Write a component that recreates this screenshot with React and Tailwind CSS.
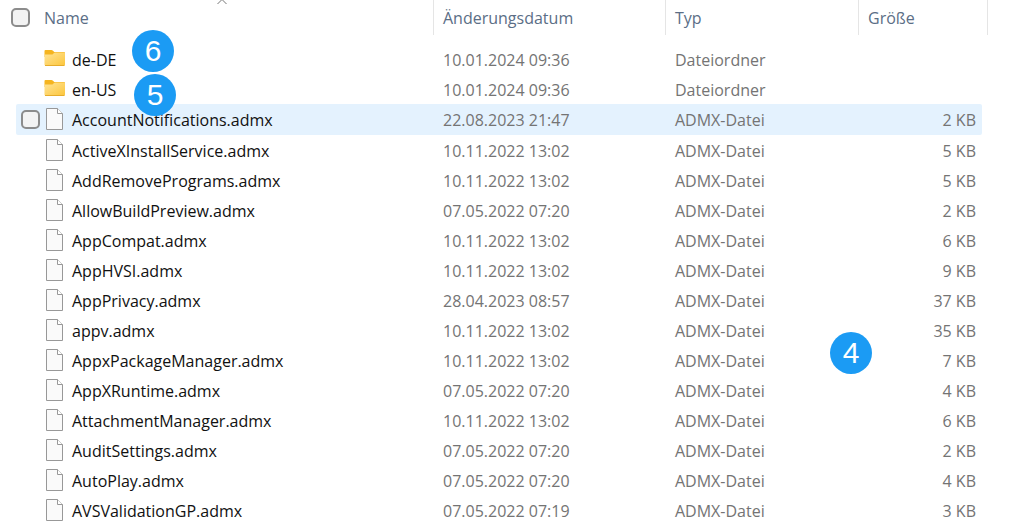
import React from 'react';

const entries = [
  { name: 'de-DE', date: '10.01.2024 09:36', folder: true },
  { name: 'en-US', date: '10.01.2024 09:36', folder: true },
  { name: 'AccountNotifications.admx', date: '22.08.2023 21:47', size: 2, hovered: true },
  { name: 'ActiveXInstallService.admx', date: '10.11.2022 13:02', size: 5 },
  { name: 'AddRemovePrograms.admx', date: '10.11.2022 13:02', size: 5 },
  { name: 'AllowBuildPreview.admx', date: '07.05.2022 07:20', size: 2 },
  { name: 'AppCompat.admx', date: '10.11.2022 13:02', size: 6 },
  { name: 'AppHVSI.admx', date: '10.11.2022 13:02', size: 9 },
  { name: 'AppPrivacy.admx', date: '28.04.2023 08:57', size: 37 },
  { name: 'appv.admx', date: '10.11.2022 13:02', size: 35 },
  { name: 'AppxPackageManager.admx', date: '10.11.2022 13:02', size: 7 },
  { name: 'AppXRuntime.admx', date: '07.05.2022 07:20', size: 4 },
  { name: 'AttachmentManager.admx', date: '10.11.2022 13:02', size: 6 },
  { name: 'AuditSettings.admx', date: '07.05.2022 07:20', size: 2 },
  { name: 'AutoPlay.admx', date: '07.05.2022 07:20', size: 4 },
  { name: 'AVSValidationGP.admx', date: '07.05.2022 07:19', size: 3 },
];

function FolderIcon() {
  return (
    <svg width="22" height="18" viewBox="0 0 22 18" className="shrink-0" aria-hidden="true">
      <defs>
        <linearGradient id="folder-front" x1="0" y1="0" x2="1" y2="1">
          <stop offset="0" stopColor="#ffe498" />
          <stop offset="1" stopColor="#fcc63c" />
        </linearGradient>
      </defs>
      <path d="M.5 2Q.5 1 1.5 1h6q.7 0 1.200.4L10.300 3H20q1 0 1 1v4H.5z" fill="#f5b41f" />
      <path d="M.5 5.500h7.300q.7 0 1.200-.5L10 4q.4-.5 1-.5h9q1 0 1 1v11q0 1-1 1H1.500q-1 0-1-1z" fill="url(#folder-front)" />
      <path d="M1 16.500h19.500" stroke="#e6ac2c" strokeWidth="1" />
    </svg>
  );
}

function FileIcon() {
  return (
    <svg width="18" height="22" viewBox="0 0 18 22" className="shrink-0" aria-hidden="true">
      <path d="M.5.5h11l5 5v16H.5z" fill="#fafafa" stroke="#989898" />
      <path d="M11.500.5v5h5" fill="#fff" stroke="#989898" />
    </svg>
  );
}

function Checkbox({ label }) {
  return (
    <input
      type="checkbox"
      aria-label={label}
      className="block size-[19px] appearance-none rounded-[5px] border-2 border-[#8c8c8c] bg-[#f3f3f3] checked:bg-[#0067c0]"
    />
  );
}

function Badge({ className, children }) {
  return (
    <span
      className={
        "absolute flex size-[42px] items-center justify-center rounded-full bg-[#1b9bf4] font-['Liberation_Sans',sans-serif] text-[30px] leading-none text-white " +
        className
      }
    >
      {children}
    </span>
  );
}

function Row({ entry }) {
  const shade = entry.hovered ? 'bg-[#e4f2fe]' : '';
  return (
    <tr className={entry.hovered ? 'h-[31px]' : 'h-[30px]'}>
      <td />
      <td className={'rounded-l-xs pl-[5px] ' + shade}>
        {entry.hovered && <Checkbox label={entry.name} />}
      </td>
      <td className={'align-top text-[#111111] ' + shade}>
        <div className="flex h-[30px] items-center">
          <span className={entry.folder ? 'mb-[2px] flex w-7' : 'flex w-7 pl-[2px]'}>
            {entry.folder ? <FolderIcon /> : <FileIcon />}
          </span>
          <span className="pt-[2px]">{entry.name}</span>
        </div>
      </td>
      <td className={'pt-1 pl-[9px] align-top ' + shade}>{entry.date}</td>
      <td className={'pt-1 pl-[9px] align-top ' + shade}>{entry.folder ? 'Dateiordner' : 'ADMX-Datei'}</td>
      <td className={'rounded-r-xs pt-1 pr-[6px] text-right align-top ' + shade}>
        {entry.folder ? '' : `${entry.size} KB`}
      </td>
      <td />
    </tr>
  );
}

export default function App() {
  return (
    <main className="relative min-h-screen overflow-hidden bg-white pr-[34px] font-['Open_Sans','Noto_Sans',sans-serif] text-[16px] leading-6 text-[#747474]">
      <table className="w-full table-fixed border-separate border-spacing-0">
        <colgroup>
          <col className="w-4" />
          <col className="w-7" />
          <col />
          <col className="w-[232px]" />
          <col className="w-[193px]" />
          <col className="w-[123px]" />
          <col className="w-[6px]" />
        </colgroup>
        <thead>
          <tr className="h-[35px] text-left text-[#5b6e86]">
            <th colSpan={2} className="pl-[11px] font-normal">
              <Checkbox label="Alle auswählen" />
            </th>
            <th className="border-r border-[#e5e5e5] font-normal" aria-sort="ascending">Name</th>
            <th className="border-r border-[#e5e5e5] pl-[9px] font-normal">Änderungsdatum</th>
            <th className="border-r border-[#e5e5e5] pl-[9px] font-normal">Typ</th>
            <th colSpan={2} className="border-r border-[#e5e5e5] pl-[9px] font-normal">Größe</th>
          </tr>
        </thead>
        <tbody>
          <tr className="h-[9px]">
            <td colSpan={7} />
          </tr>
          {entries.map((entry) => (
            <Row key={entry.name} entry={entry} />
          ))}
        </tbody>
      </table>

      <svg width="12" height="5" viewBox="0 0 12 5" className="absolute top-0 left-[216px]" fill="none" stroke="#777777" aria-hidden="true">
        <path d="M1.500 4 6-.5 10.500 4" />
      </svg>

      <Badge className="top-[30px] left-[132px]">6</Badge>
      <Badge className="top-[74px] left-[134px]">5</Badge>
      <Badge className="top-[332px] right-[150px]">4</Badge>
    </main>
  );
}
